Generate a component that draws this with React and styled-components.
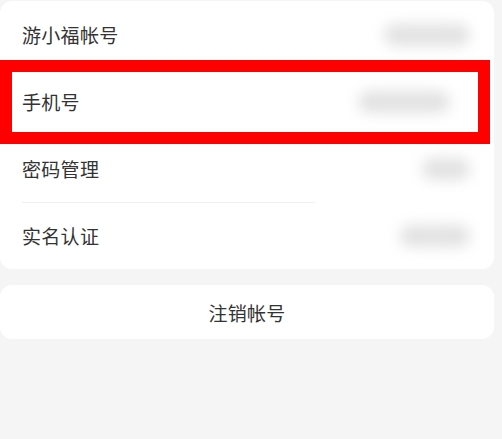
import React from "react";
import styled, { createGlobalStyle } from "styled-components";

const Global = createGlobalStyle`
  html, body { margin: 0; padding: 0; background: #f5f5f5; }
  body { font-family: "Noto Sans CJK SC", "Noto Sans", sans-serif; }
`;

const Page = styled.div`
  width: 502px;
  height: 439px;
  padding: 1px 8px 0 0;
  box-sizing: border-box;
  display: flex;
  flex-direction: column;
  gap: 16px;
  background: #f5f5f5;
  overflow: hidden;
`;

const Card = styled.div`
  position: relative;
  background: #fff;
  border-radius: 12px;
  display: flex;
  flex-direction: column;
`;

const Row = styled.div`
  height: 67px;
  display: flex;
  align-items: center;
  justify-content: space-between;
  padding: 0 24px 0 22px;
  position: relative;
  ${(p) =>
    p.$divider &&
    `&::before {
      content: "";
      position: absolute;
      top: 0;
      left: 22px;
      width: 293px;
      height: 1px;
      background: #f0f0f0;
    }`}
`;

const Label = styled.span`
  font-size: 19px;
  color: #333;
  letter-spacing: 0.3px;
`;

const Blurred = styled.span`
  filter: blur(7px);
  width: ${(p) => p.$w}px;
  height: 22px;
  background: #e2e2e2;
  border-radius: 11px;
  margin-right: ${(p) => p.$mr || 0}px;
`;

const Highlight = styled.div`
  position: absolute;
  left: 0;
  top: 59px;
  width: 490px;
  height: 84px;
  box-sizing: border-box;
  border: 12px solid #ff0000;
  pointer-events: none;
`;

const Button = styled.div`
  height: 54px;
  display: flex;
  align-items: center;
  justify-content: center;
  font-size: 19px;
  color: #333;
  letter-spacing: 0.3px;
`;

export default function App() {
  return (
    <>
      <Global />
      <Page>
        <Card>
          <Row>
            <Label>游小福帐号</Label>
            <Blurred $w={86} />
          </Row>
          <Row>
            <Label>手机号</Label>
            <Blurred $w={92} $mr={20} />
          </Row>
          <Row>
            <Label>密码管理</Label>
            <Blurred $w={48} />
          </Row>
          <Row $divider>
            <Label>实名认证</Label>
            <Blurred $w={70} />
          </Row>
          <Highlight />
        </Card>
        <Card>
          <Button>注销帐号</Button>
        </Card>
      </Page>
    </>
  );
}
